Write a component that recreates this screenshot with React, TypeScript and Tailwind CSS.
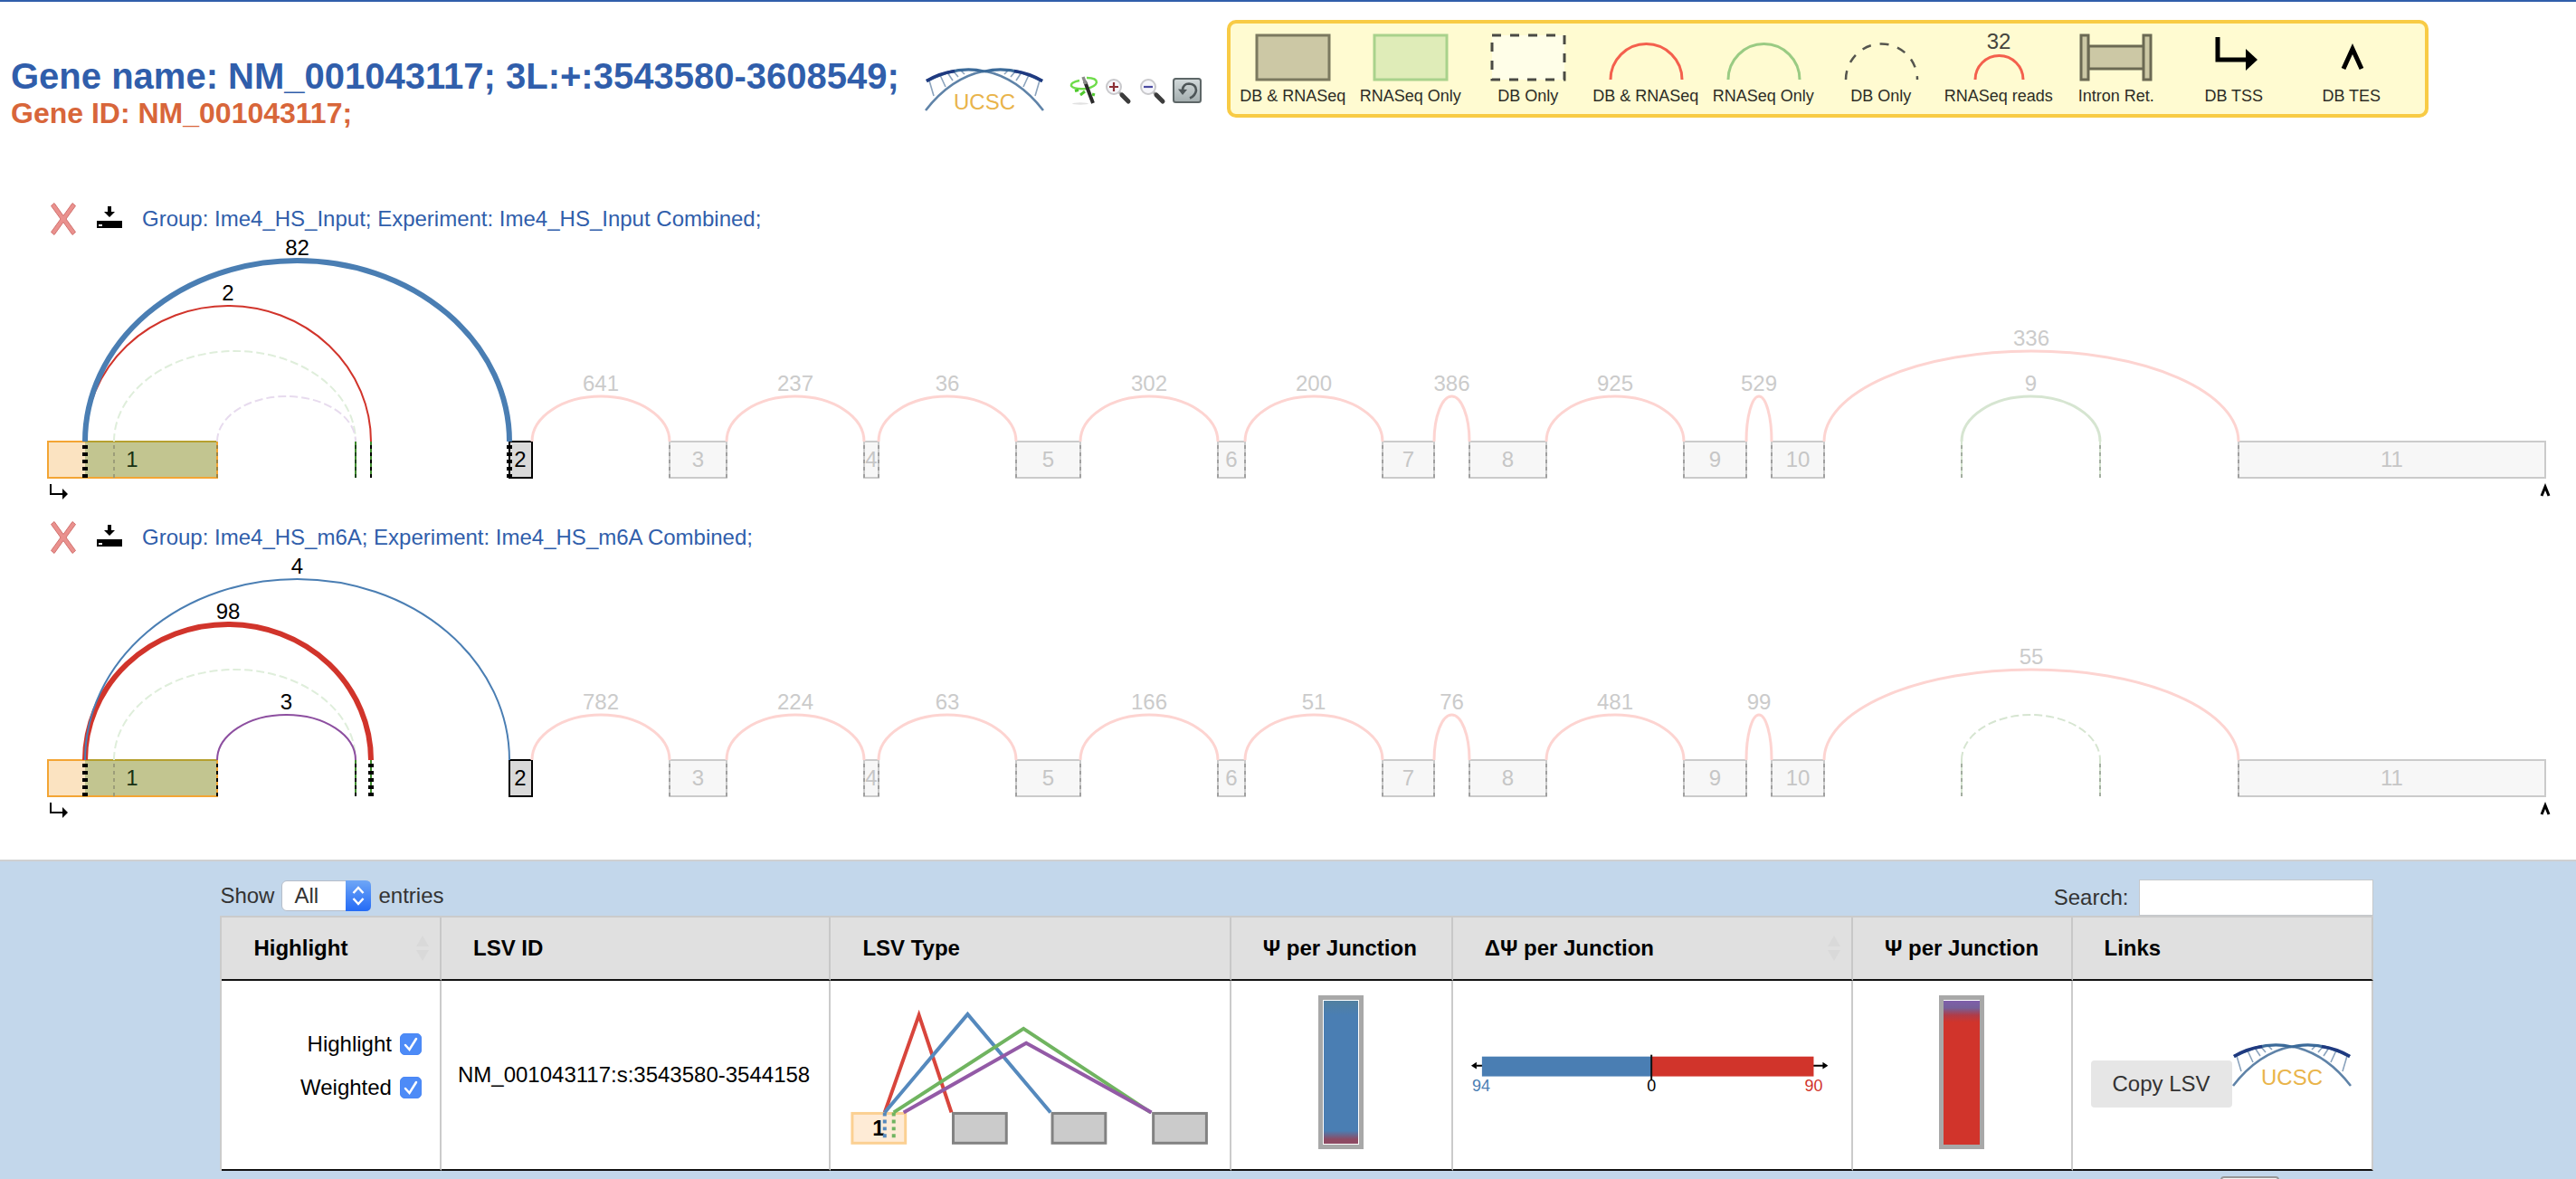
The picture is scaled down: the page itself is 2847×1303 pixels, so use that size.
import { useState } from "react";

type Tone = "plain" | "faded";

interface Junction {
  from: number;
  to: number;
  level: number;
  reads?: string;
  color: string;
  width: number;
  dashed?: boolean;
  tone: Tone;
}

interface Exon {
  id: string;
  from: number;
  to: number;
}

interface Experiment {
  title: string;
  junctions: Junction[];
  ticks: { x: number; width: number; color: string; green?: boolean }[];
}

const BASE = 230;
const EXON_HEIGHT = 40;

const RED = "#d1342b";
const BLUE = "#4a7eb3";
const PURPLE = "#8d4fa0";

const FADED_EXONS: Exon[] = [
  { id: "3", from: 740, to: 803 },
  { id: "4", from: 955, to: 971 },
  { id: "5", from: 1123, to: 1194 },
  { id: "6", from: 1346, to: 1376 },
  { id: "7", from: 1528, to: 1585 },
  { id: "8", from: 1624, to: 1709 },
  { id: "9", from: 1861, to: 1930 },
  { id: "10", from: 1958, to: 2016 },
  { id: "11", from: 2474, to: 2813 },
];

const FADED_SPANS: [number, number, number][] = [
  [588, 740, 1],
  [803, 955, 1],
  [971, 1123, 1],
  [1194, 1346, 1],
  [1376, 1528, 1],
  [1585, 1624, 1],
  [1709, 1861, 1],
  [1930, 1958, 1],
  [2016, 2474, 2],
];

function fadedJunctions(reads: string[]): Junction[] {
  return FADED_SPANS.map(([from, to, level], i) => ({
    from,
    to,
    level,
    reads: reads[i],
    color: "#fdd4d1",
    width: 3,
    tone: "faded" as Tone,
  }));
}

const EXPERIMENTS: Experiment[] = [
  {
    title: "Group: Ime4_HS_Input; Experiment: Ime4_HS_Input Combined;",
    junctions: [
      { from: 126, to: 393, level: 2, color: "#dfeedb", width: 2, dashed: true, tone: "faded" },
      { from: 240, to: 393, level: 1, color: "#e7dbee", width: 2, dashed: true, tone: "faded" },
      { from: 94, to: 410, level: 3, reads: "2", color: RED, width: 2, tone: "plain" },
      { from: 94, to: 563, level: 4, reads: "82", color: BLUE, width: 6, tone: "plain" },
      ...fadedJunctions(["641", "237", "36", "302", "200", "386", "925", "529", "336"]),
      { from: 2168, to: 2321, level: 1, reads: "9", color: "#d6e5d1", width: 3, tone: "faded" },
    ],
    ticks: [
      { x: 94, width: 6, color: "#000" },
      { x: 126, width: 2, color: "#9c9d79" },
      { x: 240, width: 2, color: "#a08340" },
      { x: 393, width: 2, color: "#1c4716", green: true },
      { x: 410, width: 2, color: "#000", green: true },
      { x: 563, width: 6, color: "#000" },
    ],
  },
  {
    title: "Group: Ime4_HS_m6A; Experiment: Ime4_HS_m6A Combined;",
    junctions: [
      { from: 126, to: 393, level: 2, color: "#dfeedb", width: 2, dashed: true, tone: "faded" },
      { from: 240, to: 393, level: 1, reads: "3", color: PURPLE, width: 2, tone: "plain" },
      { from: 94, to: 410, level: 3, reads: "98", color: RED, width: 6, tone: "plain" },
      { from: 94, to: 563, level: 4, reads: "4", color: BLUE, width: 2, tone: "plain" },
      ...fadedJunctions(["782", "224", "63", "166", "51", "76", "481", "99", "55"]),
      { from: 2168, to: 2321, level: 1, color: "#d6e5d1", width: 2, dashed: true, tone: "faded" },
    ],
    ticks: [
      { x: 94, width: 6, color: "#000" },
      { x: 126, width: 2, color: "#9c9d79" },
      { x: 240, width: 2, color: "#000" },
      { x: 393, width: 2, color: "#000", green: true },
      { x: 410, width: 6, color: "#000", green: true },
      { x: 563, width: 2, color: "#000" },
    ],
  },
];

function Tick({ x, width, color }: { x: number; width: number; color: string }) {
  return (
    <path
      d={`M${x} ${BASE + EXON_HEIGHT}V${BASE}`}
      stroke={color}
      strokeWidth={width}
      strokeDasharray="4 4"
      fill="none"
    />
  );
}

function SpliceGraph({ experiment }: { experiment: Experiment }) {
  const mid = BASE + 28;
  return (
    <svg
      viewBox="0 0 2847 320"
      className="block h-auto w-full font-['Liberation_Sans',Arial,sans-serif] text-2xl"
      role="img"
      aria-label={experiment.title}
    >
      {FADED_EXONS.map((exon) => (
        <g key={exon.id}>
          <rect
            x={exon.from}
            y={BASE}
            width={exon.to - exon.from}
            height={EXON_HEIGHT}
            fill="#f7f7f7"
            stroke="#cbcbcb"
            strokeWidth="2"
          />
          <text x={(exon.from + exon.to) / 2} y={mid} textAnchor="middle" fill="#c6c6c6">
            {exon.id}
          </text>
          <Tick x={exon.from} width={2} color="#a0a0a0" />
          {exon.id !== "11" && <Tick x={exon.to} width={2} color="#a0a0a0" />}
        </g>
      ))}
      {[2168, 2321].map((x) => (
        <g key={x}>
          <path d={`M${x} ${BASE}v${EXON_HEIGHT}`} stroke="#d6e5d1" strokeWidth="2" />
          <Tick x={x} width={2} color="#a3aea0" />
        </g>
      ))}

      <rect x="53" y={BASE} width="187" height={EXON_HEIGHT} fill="#fbe3c1" />
      <rect x="94" y={BASE} width="146" height={EXON_HEIGHT} fill="#c2c590" />
      <rect x="53" y={BASE} width="187" height={EXON_HEIGHT} fill="none" stroke="#f3a534" strokeWidth="2" />
      <path d={`M94 ${BASE}H240`} stroke="#b6a02f" strokeWidth="2" />
      <text x="146" y={mid} textAnchor="middle" fill="#173013">
        1
      </text>
      <rect x="563" y={BASE} width="25" height={EXON_HEIGHT} fill="#d9d9d9" stroke="#000" strokeWidth="2" />
      <text x="575" y={mid} textAnchor="middle" fill="#000">
        2
      </text>

      {experiment.ticks.map((tick) => (
        <g key={tick.x}>
          {tick.green && <path d={`M${tick.x} ${BASE}v${EXON_HEIGHT}`} stroke="#3f8a2e" strokeWidth="2" />}
          <Tick x={tick.x} width={tick.width} color={tick.color} />
        </g>
      ))}

      {experiment.junctions.map((j) => {
        const ry = j.level * 50;
        return (
          <g key={`${j.from}-${j.to}`}>
            <path
              d={`M${j.from} ${BASE}A${(j.to - j.from) / 2} ${ry} 0 0 1 ${j.to} ${BASE}`}
              fill="none"
              stroke={j.color}
              strokeWidth={j.width}
              strokeDasharray={j.dashed ? "9 4" : undefined}
            />
            {j.reads && (
              <text
                x={(j.from + j.to) / 2}
                y={BASE - ry - 6}
                textAnchor="middle"
                fill={j.tone === "faded" ? "#cbcbcb" : "#000"}
              >
                {j.reads}
              </text>
            )}
          </g>
        );
      })}

      <path d="M56 277v11h13" fill="none" stroke="#000" strokeWidth="2" />
      <path d="M69 282l6 6-6 6z" />
      <path d="M2809 290l4-10 4 10" fill="none" stroke="#000" strokeWidth="3" />
    </svg>
  );
}

function UcscLogo() {
  return (
    <svg viewBox="0 0 132 52" className="block h-[52px] w-[132px] shrink-0" role="img" aria-label="UCSC">
      <g fill="none">
        <path
          d="M5 15l5 17M17 9l6 13M25 6l6 9M32 5l5 6M40 4l4 4M127 15l-5 17M115 9l-6 13M107 6l-6 9M100 5l-5 6M92 4l-4 4"
          stroke="#8ba3bd"
          strokeWidth="1.6"
        />
        <path d="M1 48C18 26 38 10 66 4.500" stroke="#5f83a8" strokeWidth="2.600" />
        <path d="M131 48C114 26 94 10 66 4.500" stroke="#5f83a8" strokeWidth="2.600" />
        <path d="M66 5C50 1 30 1 2 15.500M66 5C82 1 102 1 130 15.500" stroke="#3b6a99" strokeWidth="3.200" />
        <path d="M2 15.500Q16 7 33 4.500M130 15.500Q116 7 99 4.500" stroke="#1f3a80" strokeWidth="3.600" />
      </g>
      <text
        x="66"
        y="47"
        textAnchor="middle"
        fill="#e9b44b"
        className="font-['Liberation_Sans_Narrow','Liberation_Sans',sans-serif] text-[24px]"
      >
        UCSC
      </text>
    </svg>
  );
}

function WandIcon() {
  return (
    <svg viewBox="0 0 32 32" className="block size-8">
      <ellipse cx="12" cy="30.500" rx="9" ry="1.200" fill="#e2e2e2" />
      <path d="M19 2Q30 2 30 7Q29 12 18 14Q5 15 2 11Q1 7 11 5" fill="none" stroke="#6fdc4b" strokeWidth="2.400" />
      <path d="M17 6l9 24" stroke="#2a2a2a" strokeWidth="4" />
      <path d="M15 1l3 8" stroke="#8a8a8a" strokeWidth="3.500" />
      <path d="M6 16.500l4-1M12 21l5-4M25 20l3 1" stroke="#4fc92d" strokeWidth="3" />
    </svg>
  );
}

function MagnifierIcon({ plus }: { plus: boolean }) {
  return (
    <svg viewBox="0 0 32 32" className="block size-8">
      <path d="M17 18l4 4" stroke="#9b9b9b" strokeWidth="3" />
      <path d="M20 21l7 7" stroke="#3c3c3c" strokeWidth="5" strokeLinecap="round" />
      <circle cx="11" cy="12" r="8" fill="#f6f6fa" stroke="#c9c9cc" strokeWidth="2" />
      {plus ? (
        <path d="M6 12h10M11 7v10" stroke="#8c2f35" strokeWidth="2.200" />
      ) : (
        <path d="M6 12h10" stroke="#4b4ba0" strokeWidth="2.200" />
      )}
    </svg>
  );
}

function ResetIcon() {
  return (
    <svg viewBox="0 0 32 28" className="block h-7 w-8">
      <defs>
        <linearGradient id="resetFace" x1="0" y1="0" x2="0" y2="1">
          <stop offset="0" stopColor="#d3dadb" />
          <stop offset="1" stopColor="#a3adae" />
        </linearGradient>
      </defs>
      <rect x="1" y="1" width="30" height="26" rx="2.500" fill="url(#resetFace)" stroke="#5d6667" strokeWidth="2" />
      <path d="M11 13Q12 6.500 18 6.500Q26 7 26 14Q25 20 19 22.500" fill="none" stroke="#4d5557" strokeWidth="2.600" />
      <path d="M6 12.500l10 0.500-5 6z" fill="#4d5557" />
    </svg>
  );
}

function DeleteIcon() {
  return (
    <svg viewBox="0 0 28 36" className="block h-9 w-7">
      <path
        d="M4 0.500L14 14.500 24 0.500 27.500 3.500 17 18 27.500 32.500 24 35.500 14 21.500 4 35.500 0.500 32.500 11 18 0.500 3.500z"
        fill="#ea918e"
        stroke="#d0726f"
        strokeWidth="1"
      />
    </svg>
  );
}

function DownloadIcon() {
  return (
    <svg viewBox="0 0 28 24" className="block h-6 w-7">
      <path d="M12 0h4v6h4l-6 6-6-6h4z" />
      <path d="M0 16h28v8H0zM2 20v2h4v-2z" fillRule="evenodd" />
    </svg>
  );
}

const LEGEND: { label: string; art: React.ReactNode }[] = [
  {
    label: "DB & RNASeq",
    art: <rect x="25" y="13" width="80" height="49" fill="#ccc8a5" stroke="#7b795f" strokeWidth="3" />,
  },
  {
    label: "RNASeq Only",
    art: <rect x="25" y="13" width="80" height="49" fill="#dfecb8" stroke="#a9d28c" strokeWidth="3" />,
  },
  {
    label: "DB Only",
    art: (
      <rect x="25" y="13" width="80" height="49" fill="#fffee8" stroke="#4a4a44" strokeWidth="3" strokeDasharray="10 10" />
    ),
  },
  {
    label: "DB & RNASeq",
    art: <path d="M26 62A39.500 39.500 0 0 1 105 62" fill="none" stroke="#f4604d" strokeWidth="3" />,
  },
  {
    label: "RNASeq Only",
    art: <path d="M26 62A39.500 39.500 0 0 1 105 62" fill="none" stroke="#9acb83" strokeWidth="3" />,
  },
  {
    label: "DB Only",
    art: (
      <path d="M26 62A39.500 39.500 0 0 1 105 62" fill="none" stroke="#55554e" strokeWidth="2.500" strokeDasharray="10 10" />
    ),
  },
  {
    label: "RNASeq reads",
    art: (
      <>
        <text x="65" y="28" textAnchor="middle" fill="#44443d" className="text-[24px]">
          32
        </text>
        <path d="M39 62A26.500 26.500 0 0 1 92 62" fill="none" stroke="#f4604d" strokeWidth="3" />
      </>
    ),
  },
  {
    label: "Intron Ret.",
    art: (
      <g fill="#ccc8a5" stroke="#6b6953" strokeWidth="3">
        <rect x="34" y="25" width="62" height="25" />
        <rect x="26" y="13" width="8" height="49" />
        <rect x="95" y="13" width="8" height="49" />
      </g>
    ),
  },
  {
    label: "DB TSS",
    art: (
      <>
        <path d="M47 15v25h33" fill="none" stroke="#000" strokeWidth="5" />
        <path d="M78 28l13 12-13 12z" />
      </>
    ),
  },
  {
    label: "DB TES",
    art: <path d="M56 50l10-22 10 22" fill="none" stroke="#000" strokeWidth="5" />,
  },
];

function Legend() {
  return (
    <ul className="grid h-[108px] grid-cols-[repeat(10,130px)] rounded-[10px] border-4 border-[#f8cb45] bg-[#fffbd1] pr-4 pl-1">
      {LEGEND.map((item, i) => (
        <li key={i} className="flex flex-col items-center">
          <svg viewBox="0 0 130 68" className="block h-[68px] w-[130px]" aria-hidden="true">
            {item.art}
          </svg>
          <span className="text-[18px] leading-6 whitespace-nowrap text-[#2d2d26]">{item.label}</span>
        </li>
      ))}
    </ul>
  );
}

function CheckOption({ label }: { label: string }) {
  const [on, setOn] = useState(true);
  return (
    <label className="flex h-12 items-center justify-end gap-[9px] text-2xl">
      {label}
      <span className="relative block size-6">
        <input
          type="checkbox"
          checked={on}
          onChange={() => setOn(!on)}
          className="block size-6 appearance-none rounded-[5px] border border-[#4a87f5] bg-white checked:bg-[#4d8bf7]"
        />
        {on && (
          <svg viewBox="0 0 24 24" className="pointer-events-none absolute inset-0 size-6">
            <path d="M6 13l4.500 5L18 6" fill="none" stroke="#fff" strokeWidth="2.500" strokeLinecap="round" />
          </svg>
        )}
      </span>
    </label>
  );
}

function LsvType() {
  return (
    <svg viewBox="0 0 442 208" className="block h-auto w-full" role="img" aria-label="LSV type">
      <rect x="24" y="147" width="59" height="33" fill="#feebd6" stroke="#fbd092" strokeWidth="3" />
      {[136, 246, 358].map((x) => (
        <rect key={x} x={x} y="147" width="59" height="33" fill="#cbcbcb" stroke="#828282" strokeWidth="3" />
      ))}
      <text x="53" y="172" textAnchor="middle" className="text-2xl font-bold">
        1
      </text>
      <g fill="none" strokeWidth="4">
        <path d="M60 146L98 38L134 146" stroke="#d8453c" />
        <path d="M60 146L152 37L244 146" stroke="#5589bd" />
        <path d="M70 146L214 53L355 146" stroke="#70b460" />
        <path d="M81 146L217 69L356 146" stroke="#935aa6" />
        <path d="M60 146v30" stroke="#5589bd" strokeDasharray="4 4" />
        <path d="M70 146v30" stroke="#70b460" strokeDasharray="4 4" />
      </g>
    </svg>
  );
}

function DeltaPsi() {
  return (
    <svg viewBox="0 0 442 208" className="block h-auto w-full text-lg" role="img" aria-label="Delta psi per junction">
      <path d="M26 94h388" stroke="#000" strokeWidth="2" />
      <path d="M20 94l6-4v8zM416 94l-6-4v8z" />
      <rect x="32" y="84" width="188" height="22" fill={BLUE} />
      <rect x="220" y="84" width="180" height="22" fill={RED} />
      <path d="M220 82v28" stroke="#111" strokeWidth="2" />
      <text x="31" y="122" textAnchor="middle" fill={BLUE}>
        94
      </text>
      <text x="220" y="122" textAnchor="middle">
        0
      </text>
      <text x="400" y="122" textAnchor="middle" fill={RED}>
        90
      </text>
    </svg>
  );
}

function SortArrows() {
  return (
    <svg viewBox="0 0 14 28" className="block h-7 w-[14px]" fill="#d9d9d9" aria-hidden="true">
      <path d="M7 0l7 12H0zM7 28l7-12H0z" />
    </svg>
  );
}

const COLUMNS: { label: string; sortable?: boolean; width: string }[] = [
  { label: "Highlight", sortable: true, width: "w-[10.2%]" },
  { label: "LSV ID", width: "w-[18.1%]" },
  { label: "LSV Type", width: "w-[18.6%]" },
  { label: "Ψ per Junction", width: "w-[10.3%]" },
  { label: "ΔΨ per Junction", sortable: true, width: "w-[18.6%]" },
  { label: "Ψ per Junction", width: "w-[10.2%]" },
  { label: "Links", width: "w-[14%]" },
];

export default function App() {
  return (
    <div className="flex h-screen flex-col overflow-hidden border-t-2 border-[#305eab] bg-white font-['Liberation_Sans',Arial,sans-serif] text-black">
      <header className="flex h-[224px] shrink-0 items-start pl-3">
        <div className="pt-[59px] font-bold whitespace-nowrap">
          <h1 className="text-[40px] leading-[46px] text-[#305eab]">
            Gene name: NM_001043117; 3L:+:3543580-3608549;
          </h1>
          <h2 className="text-[32px] leading-[36px] text-[#d8663a]">Gene ID: NM_001043117;</h2>
        </div>
        <a href="#ucsc" className="ml-7 mt-[72px]">
          <UcscLogo />
        </a>
        <div className="ml-7 mt-[82px] flex gap-[6px]">
          <button type="button" aria-label="Toggle scale">
            <WandIcon />
          </button>
          <button type="button" aria-label="Zoom in">
            <MagnifierIcon plus />
          </button>
          <button type="button" aria-label="Zoom out">
            <MagnifierIcon plus={false} />
          </button>
          <button type="button" aria-label="Reset zoom">
            <ResetIcon />
          </button>
        </div>
        <div className="ml-7 mt-5">
          <Legend />
        </div>
      </header>

      <main className="shrink-0 pb-5">
        {EXPERIMENTS.map((experiment) => (
          <section key={experiment.title}>
            <div className="flex h-8 items-center pl-14">
              <button type="button" aria-label="Remove experiment">
                <DeleteIcon />
              </button>
              <button type="button" aria-label="Download graph" className="ml-[23px] pb-1">
                <DownloadIcon />
              </button>
              <h3 className="ml-[22px] text-2xl leading-8 text-[#305eab]">{experiment.title}</h3>
            </div>
            <SpliceGraph experiment={experiment} />
          </section>
        ))}
      </main>

      <section className="flex-1 border-t-2 border-[#cfd0d1] bg-[#c3d7eb]">
        <div className="ml-[8.55%] w-[83.6%]">
          <div className="flex h-[60px] items-start justify-between pt-5 text-2xl text-[#333]">
            <label className="flex h-9 items-center gap-2">
              Show
              <span className="relative block">
                <select className="block h-[34px] w-[99px] appearance-none rounded-md border border-[#b5bdc9] bg-white pl-[13px] text-2xl leading-8 text-[#333]">
                  <option>All</option>
                  <option>10</option>
                </select>
                <svg viewBox="0 0 28 34" className="pointer-events-none absolute top-0 right-0 h-[34px] w-7">
                  <defs>
                    <linearGradient id="stepper" x1="0" y1="0" x2="0" y2="1">
                      <stop offset="0" stopColor="#6ea6f6" />
                      <stop offset="1" stopColor="#246bf6" />
                    </linearGradient>
                  </defs>
                  <path d="M0 0H22Q28 0 28 6V28Q28 34 22 34H0z" fill="url(#stepper)" />
                  <path d="M8.500 14L14 8l5.500 6M8.500 20L14 26l5.500-6" fill="none" stroke="#fff" strokeWidth="2.500" />
                </svg>
              </span>
              entries
            </label>
            <label className="flex h-10 items-center gap-3">
              Search:
              <input type="search" className="h-10 w-[259px] border border-[#c4c8cc] bg-white px-2" />
            </label>
          </div>

          <table className="w-full table-fixed border-separate border-spacing-0 border-t-2 border-l-2 border-[#cbcbcb] text-2xl">
            <thead>
              <tr>
                {COLUMNS.map((column, i) => (
                  <th
                    key={i}
                    className={`${column.width} h-[70px] border-r-2 border-b-2 border-r-[#c8c8c8] border-b-[#111] bg-[#e0e0e0] pr-3 pl-[35px] text-left font-bold whitespace-nowrap`}
                  >
                    <span className="flex items-center justify-between">
                      {column.label}
                      {column.sortable && <SortArrows />}
                    </span>
                  </th>
                ))}
              </tr>
            </thead>
            <tbody>
              <tr className="bg-white [&>td]:h-[210px] [&>td]:border-r-2 [&>td]:border-b-2 [&>td]:border-r-[#cbcbcb] [&>td]:border-b-[#111] [&>td]:align-top">
                <td className="pt-[46px] pr-5">
                  <CheckOption label="Highlight" />
                  <CheckOption label="Weighted" />
                </td>
                <td className="pl-[18px]">
                  <span className="flex h-[208px] items-center">NM_001043117:s:3543580-3544158</span>
                </td>
                <td>
                  <LsvType />
                </td>
                <td className="pt-4">
                  <div className="mx-auto h-[170px] w-[50px] border-[5px] border-[#a8a8a8] bg-white p-px">
                    <div className="h-full bg-[linear-gradient(to_bottom,#5280a0_0%,#4a7eb3_10%,#4a7eb3_91%,#8d4a63_97%)]" />
                  </div>
                </td>
                <td>
                  <DeltaPsi />
                </td>
                <td className="pt-4">
                  <div className="mx-auto h-[170px] w-[50px] border-[5px] border-[#a8a8a8] bg-white pt-px">
                    <div className="h-full bg-[linear-gradient(to_bottom,#7f5fab_0%,#75609a_5%,#b03c48_10%,#d1342b_15%)]" />
                  </div>
                </td>
                <td>
                  <div className="flex items-start pt-[68px] pl-5">
                    <button
                      type="button"
                      className="mt-5 h-[52px] rounded-[4px] bg-[#e6e6e6] px-6 text-2xl whitespace-nowrap text-[#333]"
                    >
                      Copy LSV
                    </button>
                    <a href="#ucsc-lsv">
                      <UcscLogo />
                    </a>
                  </div>
                </td>
              </tr>
            </tbody>
          </table>

          <div className="flex justify-end pt-[6px] pr-[104px]">
            <button
              type="button"
              aria-label="Current page"
              className="h-10 w-[65px] rounded-[4px] border-2 border-[#979797] bg-[#f4f4f4]"
            />
          </div>
        </div>
      </section>
    </div>
  );
}
